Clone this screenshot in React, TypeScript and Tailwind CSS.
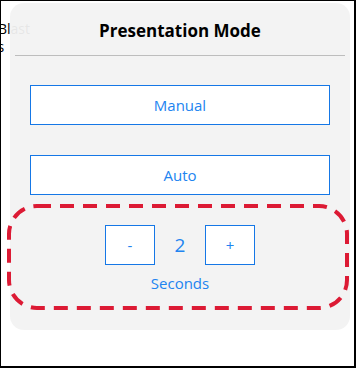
import React, { useState } from 'react';

const font = { fontFamily: '"Open Sans", "Noto Sans", sans-serif' };

export default function App() {
  const [seconds, setSeconds] = useState(2);

  return (
    <div
      className="relative w-[356px] h-[368px] overflow-hidden bg-white border-l border-t border-r-2 border-b-2 border-black"
      style={font}
    >
      {/* page text peeking out behind the panel */}
      <div className="absolute left-[-3px] top-[19px] text-[14px] leading-[18px] text-black">
        <div>Blast</div>
        <div className="ml-[-4px]">ls</div>
      </div>

      <div className="relative ml-[9px] mt-[2px] w-[340px] h-[327px] rounded-[14px] bg-[#f2f2f2]/95">
        <h2 className="pt-[16px] h-[39px] text-center text-[17px] leading-[24px] font-bold text-black">
          Presentation Mode
        </h2>
        <div className="mx-[5px] mt-[13px] border-t border-[#bdbdbd]" />

        <div className="flex flex-col gap-[30px] mx-[20px] mt-[29px]">
          <button className="h-[40px] bg-white border border-[#1577e6] text-[#2184f0] text-[15px]">
            Manual
          </button>
          <button className="h-[40px] bg-white border border-[#1577e6] text-[#2184f0] text-[15px]">
            Auto
          </button>
        </div>

        <div className="flex justify-center mt-[30px]">
          <button
            onClick={() => setSeconds(Math.max(1, seconds - 1))}
            className="w-[50px] h-[40px] bg-white border border-[#1577e6] text-[#2184f0] text-[15px]"
          >
            -
          </button>
          <div className="w-[50px] h-[40px] flex items-center justify-center text-[#2184f0] text-[19px]">
            {seconds}
          </div>
          <button
            onClick={() => setSeconds(seconds + 1)}
            className="w-[50px] h-[40px] bg-white border border-[#1577e6] text-[#2184f0] text-[15px]"
          >
            +
          </button>
        </div>
        <div className="mt-[8px] text-center text-[15px] leading-[20px] text-[#2184f0]">Seconds</div>

        {/* annotation outline */}
        <svg
          className="absolute left-[-3px] top-[201px] pointer-events-none"
          width="342"
          height="106"
          viewBox="0 0 342 106"
          fill="none"
        >
          <rect
            x="2"
            y="2"
            width="338"
            height="102"
            rx="28"
            stroke="#dc1a34"
            strokeWidth="4"
            strokeDasharray="14 9"
          />
        </svg>
      </div>
    </div>
  );
}
